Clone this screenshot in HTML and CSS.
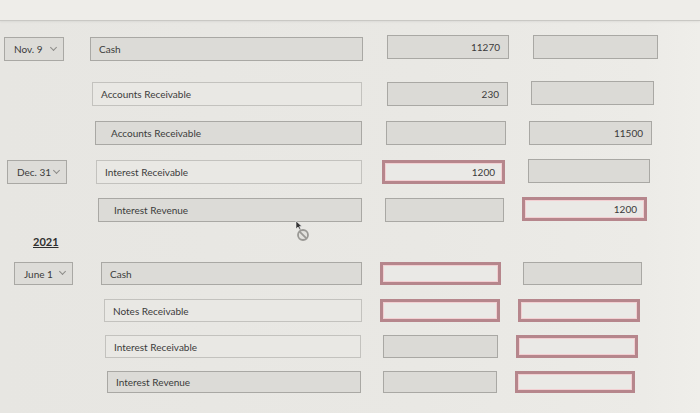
FILE: index.html
```html
<!DOCTYPE html>
<html>
<head>
<meta charset="utf-8">
<link rel="stylesheet" href="styles.css">
</head>
<body>
<div class="topbar"></div>
<div class="sheet">
  <div class="row r1">
    <div class="date">Nov. 9<span class="chev"></span></div>
    <div class="acct dark">Cash</div>
    <div class="amt dr">11270</div>
    <div class="amt cr"></div>
  </div>
  <div class="row r2">
    <div class="acct light">Accounts Receivable</div>
    <div class="amt dr">230</div>
    <div class="amt cr"></div>
  </div>
  <div class="row r3">
    <div class="acct dark indent">Accounts Receivable</div>
    <div class="amt dr"></div>
    <div class="amt cr">11500</div>
  </div>
  <div class="row r4">
    <div class="date">Dec. 31<span class="chev"></span></div>
    <div class="acct light">Interest Receivable</div>
    <div class="amt dr bad">1200</div>
    <div class="amt cr"></div>
  </div>
  <div class="row r5">
    <div class="acct dark indent">Interest Revenue</div>
    <div class="amt dr"></div>
    <div class="amt cr bad">1200</div>
  </div>
  <div class="year">2021</div>
  <div class="row r7">
    <div class="date">June 1<span class="chev"></span></div>
    <div class="acct dark">Cash</div>
    <div class="amt dr bad"></div>
    <div class="amt cr"></div>
  </div>
  <div class="row r8">
    <div class="acct light">Notes Receivable</div>
    <div class="amt dr bad"></div>
    <div class="amt cr bad"></div>
  </div>
  <div class="row r9">
    <div class="acct light">Interest Receivable</div>
    <div class="amt dr"></div>
    <div class="amt cr bad"></div>
  </div>
  <div class="row r10">
    <div class="acct dark">Interest Revenue</div>
    <div class="amt dr"></div>
    <div class="amt cr bad"></div>
  </div>
  <div class="cursor">
    <svg width="20" height="26" viewBox="0 0 20 26">
      <path d="M1 1 L1 9 L3 7 L5 10 L6 9.5 L4.5 6.5 L7 6.5 Z" fill="#333" stroke="#eee" stroke-width="0.6"/>
      <circle cx="8" cy="15" r="5" fill="#e2e1dd" stroke="#9a9995" stroke-width="1.8"/>
      <line x1="4.6" y1="11.6" x2="11.4" y2="18.4" stroke="#9a9995" stroke-width="1.8"/>
    </svg>
  </div>
</div>
</body>
</html>
```

FILE: styles.css
```css
html, body {
  margin: 0;
  padding: 0;
}
body {
  width: 700px;
  height: 413px;
  overflow: hidden;
  background: linear-gradient(90deg, #e7e6e2 0%, #e9e8e4 60%, #ecebe7 92%, #efeeea 100%);
  font-family: Lato, "Open Sans", sans-serif;
  font-size: 10px;
  color: #3b3b3b;
}
.topbar {
  height: 20px;
  background: #eeede9;
  border-bottom: 1px solid #c9c8c4;
  box-shadow: 0 1px 2px rgba(0,0,0,0.06);
}
.sheet {
  position: relative;
  display: flex;
  flex-direction: column;
}
.row {
  display: grid;
  align-items: center;
}
.date { grid-column: 2; grid-row: 1; }
.acct { grid-column: 4; grid-row: 1; }
.dr { grid-column: 6; grid-row: 1; }
.cr { grid-column: 8; grid-row: 1; }
.date, .acct, .amt {
  box-sizing: border-box;
  display: flex;
  align-items: center;
  height: 24px;
  border: 1px solid #a9a8a4;
  white-space: nowrap;
}
.date {
  background: #dddcd8;
  padding-left: 9px;
  justify-content: space-between;
  padding-right: 7px;
}
.chev {
  width: 4px;
  height: 4px;
  border-right: 1px solid #8c8b88;
  border-bottom: 1px solid #8c8b88;
  transform: translate(0, -2px) rotate(45deg);
}
.acct {
  padding-left: 8px;
}
.acct.indent {
  padding-left: 15px;
}
.acct.dark {
  background: #dcdbd7;
}
.acct.light {
  background: #e9e8e4;
  border-color: #c3c2be;
}
.amt {
  background: #dbdad6;
  justify-content: flex-end;
  padding-right: 8px;
}
.amt.bad {
  background: #eae9e6;
  border: 3px solid #b6868c;
  box-shadow: inset 0 0 0 1px #f2cfd2;
  padding-right: 7px;
}
.r1 { margin-top: 16px; grid-template-columns: 4px 60px 26px 273px 24px 122px 24px 125px; }
.r2 { margin-top: 21px; grid-template-columns: 92px 0 0 270px 25px 121px 23px 123px; }
.r3 { margin-top: 15px; grid-template-columns: 95px 0 0 267px 24px 120px 23px 123px; }
.r4 { margin-top: 15px; grid-template-columns: 7px 60px 29px 266px 20px 123px 23px 122px; }
.r5 { margin-top: 14px; grid-template-columns: 98px 0 0 264px 23px 119px 18px 125px; }
.r7 { margin-top: 14px; grid-template-columns: 14px 59px 28px 261px 18px 121px 22px 119px; }
.r8 { margin-top: 14px; grid-template-columns: 104px 0 0 258px 18px 120px 18px 122px; }
.r9 { margin-top: 13px; grid-template-columns: 105px 0 0 256px 22px 115px 18px 122px; }
.r10 { margin-top: 13px; grid-template-columns: 107px 0 0 254px 22px 114px 18px 120px; }
.r7 > *, .r8 > *, .r9 > * { height: 23px; }
.r10 > * { height: 22px; }
.r1 .dr { transform: translateY(-2px); }
.r1 .cr { transform: translateY(-2px); }
.r2 .cr { transform: translateY(-1px); }
.r4 .cr, .r5 .cr { transform: translateY(-1px); }
.year {
  margin-top: 14px;
  margin-left: 33px;
  height: 12px;
  line-height: 12px;
  font-weight: 700;
  font-size: 11px;
  text-decoration: underline;
  color: #2f2f2f;
}
.cursor {
  position: absolute;
  left: 295px;
  top: 199px;
}
```
